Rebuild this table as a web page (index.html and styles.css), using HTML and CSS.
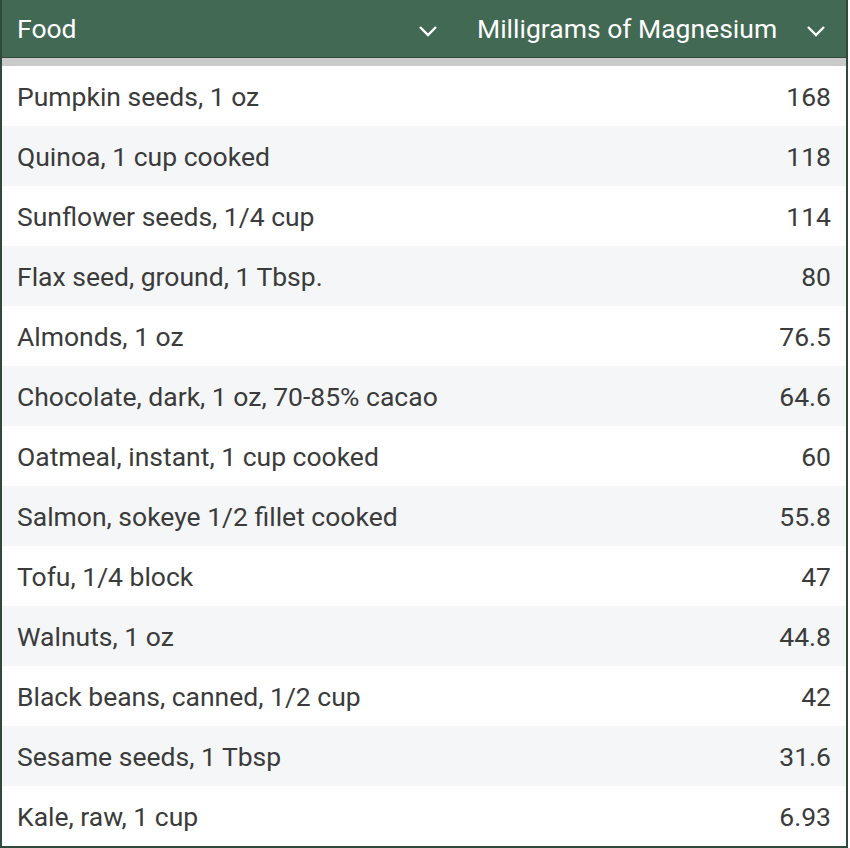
FILE: index.html
```html
<!DOCTYPE html>
<html>
<head>
<meta charset="utf-8">
<link rel="stylesheet" href="styles.css">
</head>
<body>
<div class="wrap">
  <div class="head">
    <div class="hcell hfood"><span>Food</span><svg class="chev" viewBox="0 0 20 12" width="20" height="12"><path d="M2 2 L10 10 L18 2" fill="none" stroke="#fff" stroke-width="2.4"/></svg></div>
    <div class="hcell hmg"><span>Milligrams of Magnesium</span><svg class="chev" viewBox="0 0 20 12" width="20" height="12"><path d="M2 2 L10 10 L18 2" fill="none" stroke="#fff" stroke-width="2.4"/></svg></div>
  </div>
  <div class="bar"></div>
  <div class="rows">
    <div class="row"><span>Pumpkin seeds, 1 oz</span><span>168</span></div>
    <div class="row"><span>Quinoa, 1 cup cooked</span><span>118</span></div>
    <div class="row"><span>Sunflower seeds, 1/4 cup</span><span>114</span></div>
    <div class="row"><span>Flax seed, ground, 1 Tbsp.</span><span>80</span></div>
    <div class="row"><span>Almonds, 1 oz</span><span>76.5</span></div>
    <div class="row"><span>Chocolate, dark, 1 oz, 70-85% cacao</span><span>64.6</span></div>
    <div class="row"><span>Oatmeal, instant, 1 cup cooked</span><span>60</span></div>
    <div class="row"><span>Salmon, sokeye 1/2 fillet cooked</span><span>55.8</span></div>
    <div class="row"><span>Tofu, 1/4 block</span><span>47</span></div>
    <div class="row"><span>Walnuts, 1 oz</span><span>44.8</span></div>
    <div class="row"><span>Black beans, canned, 1/2 cup</span><span>42</span></div>
    <div class="row"><span>Sesame seeds, 1 Tbsp</span><span>31.6</span></div>
    <div class="row"><span>Kale, raw, 1 cup</span><span>6.93</span></div>
  </div>
</div>
</body>
</html>
```

FILE: styles.css
```css
html, body {
  margin: 0;
  padding: 0;
  background: #fff;
}
body {
  font-family: Roboto, "Liberation Sans", sans-serif;
}
.wrap {
  width: 848px;
  box-sizing: border-box;
  border-left: 2px solid #2f4a3d;
  border-right: 2px solid #2f4a3d;
  border-bottom: 2px solid #2f4a3d;
}
.head {
  display: flex;
  height: 57px;
  background: #426953;
  border-bottom: 1px solid #2f4a3d;
  color: #fff;
  font-size: 26.5px;
}
.hcell {
  display: flex;
  align-items: center;
  justify-content: space-between;
  box-sizing: border-box;
}
.hfood {
  width: 456px;
  padding: 0 20px 0 15px;
}
.hmg {
  flex: 1;
  padding: 0 20px 0 19px;
}
.chev {
  display: block;
  margin-top: 4px;
}
.bar {
  height: 8px;
  background: #c9cbca;
}
.row {
  display: flex;
  justify-content: space-between;
  align-items: center;
  height: 60px;
  padding: 0 15px;
  font-size: 26.5px;
  color: #3b3b3b;
  background: #fff;
}
.row:nth-child(even) {
  background: #f5f6f8;
}
```
